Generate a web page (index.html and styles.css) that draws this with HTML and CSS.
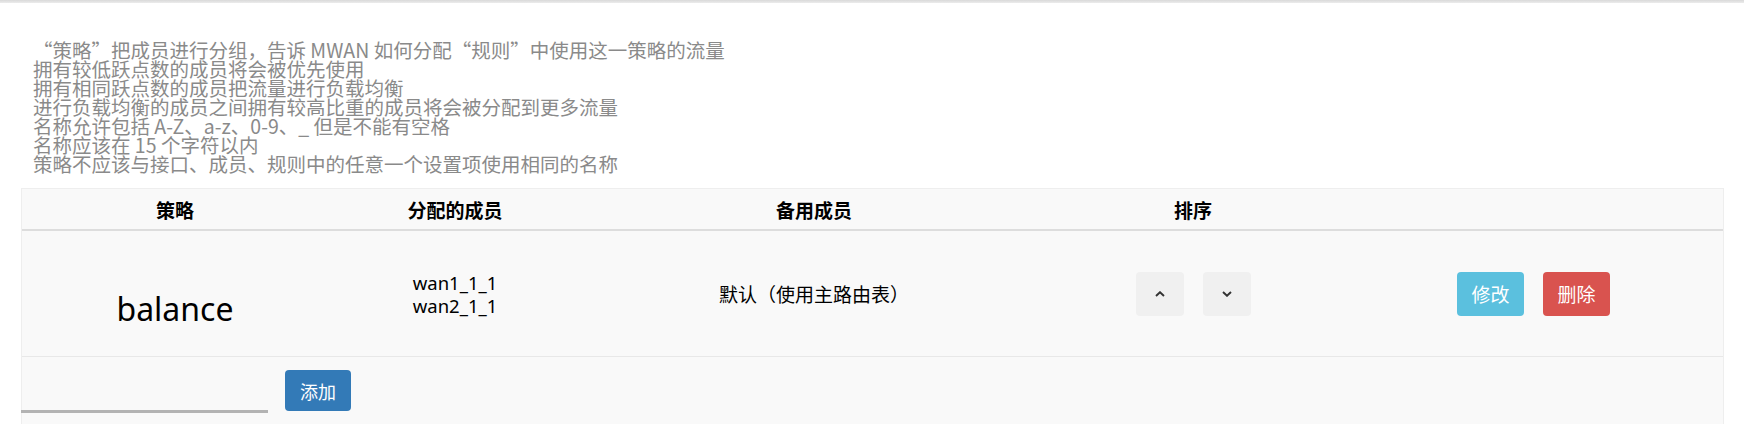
FILE: index.html
```html
<!DOCTYPE html>
<html lang="zh-CN">
<head>
<meta charset="utf-8">
<title>MWAN 策略</title>
<link rel="stylesheet" href="styles.css">
</head>
<body>
<div class="topbar"></div>
<div class="page">
  <div class="descr">
    <div>“策略”把成员进行分组，告诉 MWAN 如何分配“规则”中使用这一策略的流量</div>
    <div>拥有较低跃点数的成员将会被优先使用</div>
    <div>拥有相同跃点数的成员把流量进行负载均衡</div>
    <div>进行负载均衡的成员之间拥有较高比重的成员将会被分配到更多流量</div>
    <div>名称允许包括 A-Z、a-z、0-9、_ 但是不能有空格</div>
    <div>名称应该在 15 个字符以内</div>
    <div>策略不应该与接口、成员、规则中的任意一个设置项使用相同的名称</div>
  </div>
  <div class="table">
    <div class="row head">
      <div class="cell">策略</div>
      <div class="cell">分配的成员</div>
      <div class="cell">备用成员</div>
      <div class="cell">排序</div>
      <div class="cell"></div>
    </div>
    <div class="row body">
      <div class="cell name">balance</div>
      <div class="cell members">wan1_1_1<br>wan2_1_1</div>
      <div class="cell backup">默认（使用主路由表）</div>
      <div class="cell sort">
        <button class="btn-sort" type="button" aria-label="上移">
          <svg width="10" height="6" viewBox="0 0 10 6"><path d="M1 5 L5 1.2 L9 5" fill="none" stroke="#333" stroke-width="1.9"/></svg>
        </button>
        <button class="btn-sort" type="button" aria-label="下移">
          <svg width="10" height="6" viewBox="0 0 10 6"><path d="M1 1 L5 4.8 L9 1" fill="none" stroke="#333" stroke-width="1.9"/></svg>
        </button>
      </div>
      <div class="cell actions">
        <button class="btn btn-info" type="button">修改</button>
        <button class="btn btn-danger" type="button">删除</button>
      </div>
    </div>
    <div class="footer">
      <input class="name-input" type="text">
      <button class="btn btn-primary" type="button">添加</button>
    </div>
  </div>
</div>
</body>
</html>
```
FILE: styles.css
```css
html, body {
  margin: 0;
  padding: 0;
  background: #fff;
}
body {
  font-family: "Noto Sans CJK SC", "Noto Sans", sans-serif;
  color: #000;
}
.topbar {
  height: 3px;
  background: linear-gradient(#d9d9d9, #ececec);
}
.page {
  padding: 0 20px 0 21px;
}
.descr {
  margin-top: 37px;
  padding-left: 12px;
  font-size: 19.5px;
  line-height: 19px;
  color: #8a8a8a;
}
.table {
  margin-top: 15px;
  background: #f9f9f9;
  border: 1px solid #eee;
  border-bottom: none;
}
.row {
  display: grid;
  grid-template-columns: 306px 254px 464px 294px 1fr;
}
.head {
  height: 40px;
  border-bottom: 2px solid #ddd;
  align-items: center;
  font-weight: bold;
  font-size: 19px;
  text-align: center;
}
.body {
  height: 125px;
  border-bottom: 1px solid #e8e8e8;
  align-items: center;
  text-align: center;
}
.name {
  font-family: "Noto Sans", sans-serif;
  font-size: 32px;
  line-height: 50px;
  padding-top: 30px;
}
.members {
  font-family: "Noto Sans", sans-serif;
  font-size: 18.5px;
  line-height: 23px;
}
.backup {
  font-size: 19px;
}
.sort, .actions {
  display: flex;
  justify-content: center;
  gap: 19px;
}
.actions {
  padding-left: 4px;
}
.btn-sort {
  width: 48px;
  height: 44px;
  border: none;
  border-radius: 4px;
  background: #f0f0f0;
  display: flex;
  align-items: center;
  justify-content: center;
  padding: 0;
}
.btn {
  height: 44px;
  padding: 0 12px;
  border: none;
  border-radius: 4px;
  color: #fff;
  font-family: "Noto Sans CJK SC", sans-serif;
  font-size: 19px;
}
.btn-info { background: #5bc0de; width: 67px; }
.btn-danger { background: #d9534f; width: 67px; }
.footer {
  height: 67px;
  display: flex;
  align-items: flex-start;
  gap: 17px;
}
.name-input {
  box-sizing: border-box;
  width: 247px;
  height: 56px;
  margin-left: -1px;
  border: none;
  border-bottom: 3px solid #b3b3b3;
  background: transparent;
  outline: none;
}
.footer .btn-primary {
  margin-top: 13px;
  width: 66px;
  height: 41px;
  background: #337ab7;
  font-size: 18px;
  padding: 0;
}
```
